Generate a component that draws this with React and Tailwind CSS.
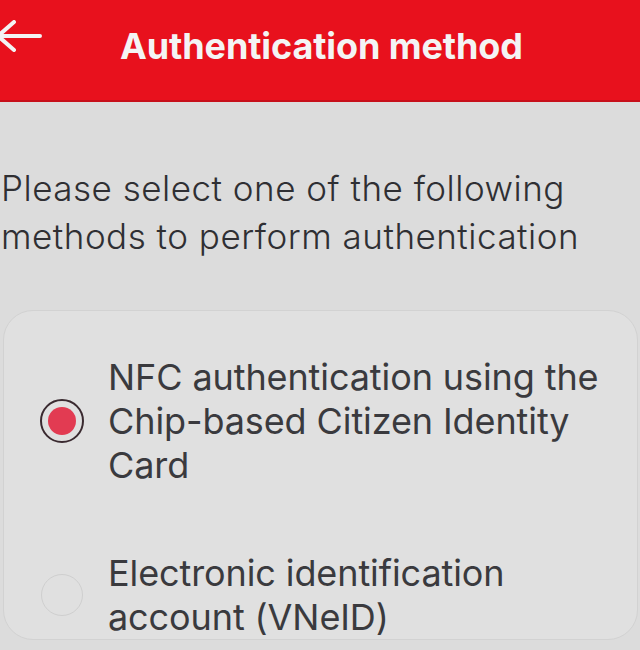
export default function App() {
  return (
    <div className="w-[640px] h-[650px] overflow-hidden bg-[#dcdcdc] font-['Inter',sans-serif]">
      <div className="h-[102px] bg-[#e8111d] border-b-2 border-[#c70f1a] flex items-center relative">
        <svg className="absolute left-[-6px] top-[20px]" width="50" height="32" viewBox="0 0 50 32" fill="none">
          <path d="M4 16 H46 M20 2 L4 16 L20 30" stroke="#f3f3f3" strokeWidth="4" strokeLinecap="round" strokeLinejoin="round" />
        </svg>
        <div className="pl-[120px] -mt-[8px] text-[36px] font-bold text-[#f4f4f4] tracking-[-0.1px]">Authentication method</div>
      </div>
      <div className="pt-[62px] pl-[1px] text-[35px] leading-[48px] font-light text-[#2f2f33] tracking-[0.5px]">
        <div>Please select one of the following</div>
        <div>methods to perform authentication</div>
      </div>
      <div className="mt-[50px] ml-[3px] mr-[2px] rounded-[30px] bg-[#e0e0e0] border border-[#d2d2d2] pt-[44px]">
        <div className="flex items-center">
          <div className="w-[104px] flex justify-center pl-[12px]">
            <div className="w-[44px] h-[44px] rounded-full border-2 border-[#3a2a30] flex items-center justify-center">
              <div className="w-[28px] h-[28px] rounded-full bg-[#e23b52]" />
            </div>
          </div>
          <div className="text-[36px] leading-[44px] text-[#3a3a3e] font-normal tracking-[-0.1px]">
            <div>NFC authentication using the</div>
            <div>Chip-based Citizen Identity</div>
            <div>Card</div>
          </div>
        </div>
        <div className="flex items-center mt-[64px]">
          <div className="w-[104px] flex justify-center pl-[12px]">
            <div className="w-[42px] h-[42px] rounded-full border border-[#cfcfcf]" />
          </div>
          <div className="text-[36px] leading-[44px] text-[#3a3a3e] font-normal tracking-[-0.1px]">
            <div>Electronic identification</div>
            <div>account (VNeID)</div>
          </div>
        </div>
      </div>
    </div>
  );
}
